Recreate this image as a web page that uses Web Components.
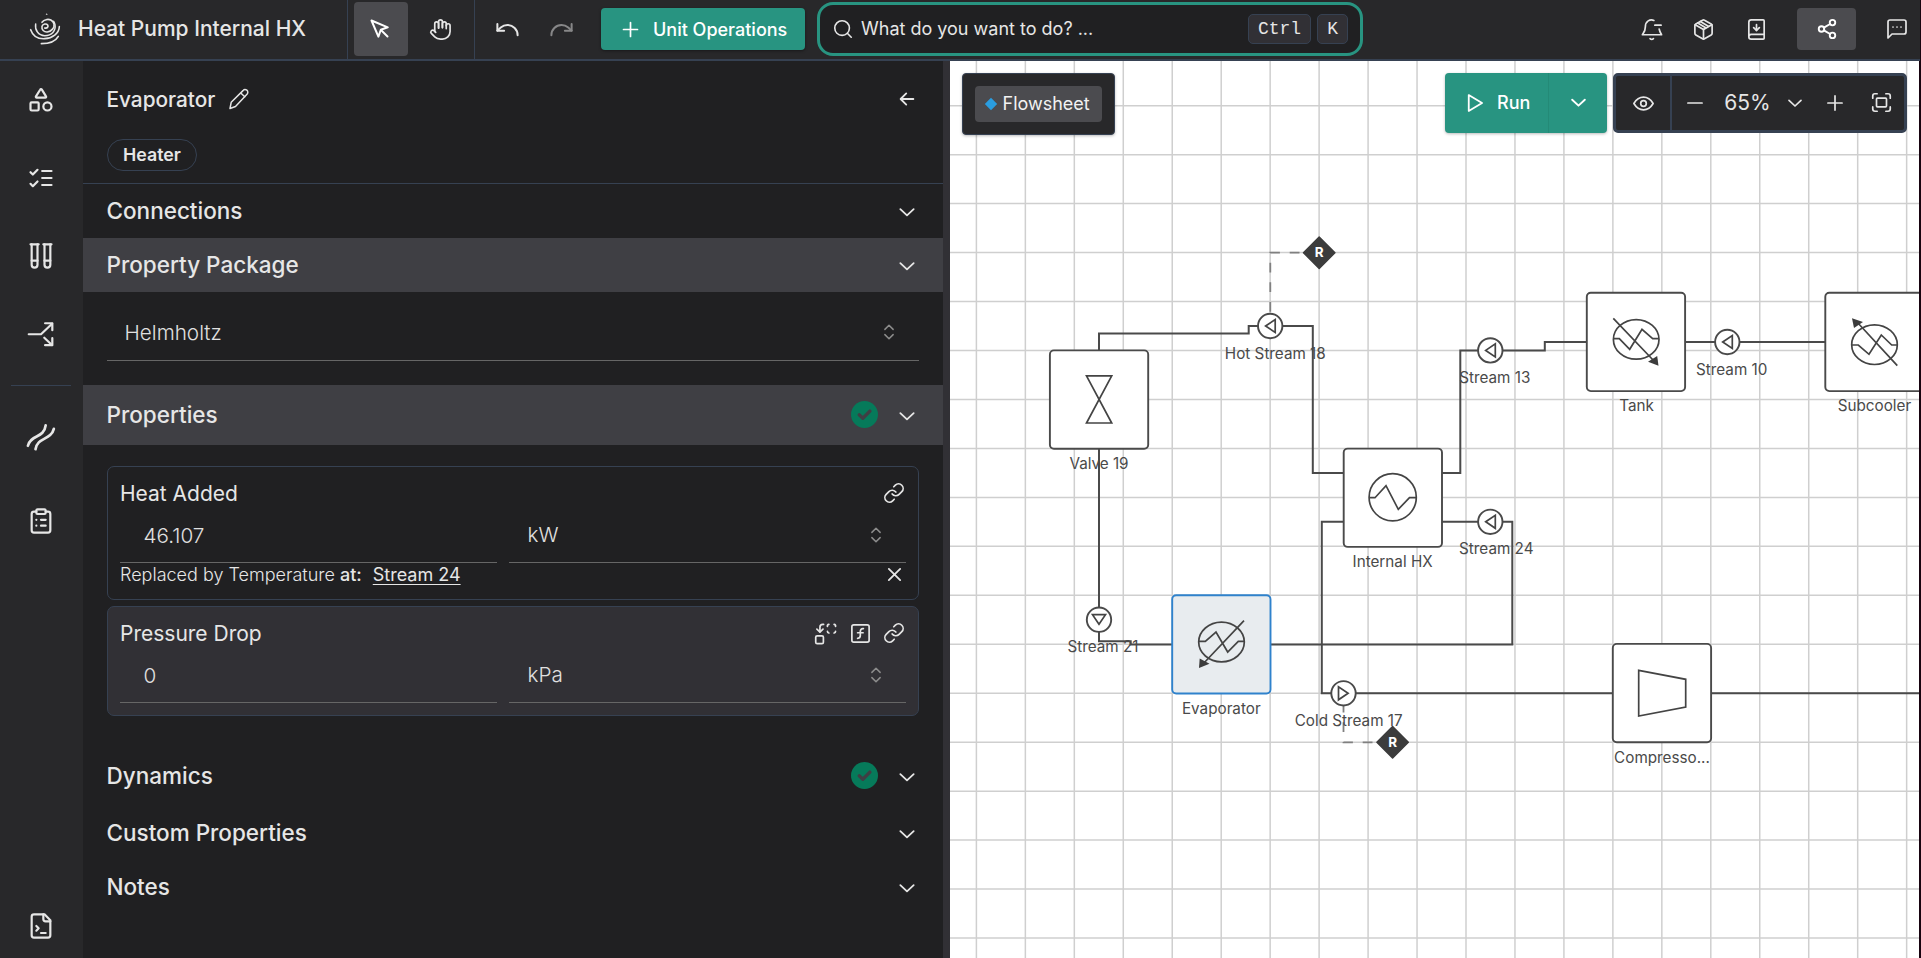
<!DOCTYPE html>
<html lang="en">
<head>
<meta charset="utf-8">
<title>Heat Pump Internal HX</title>
<style>
  html, body { margin: 0; height: 100%; overflow: hidden; background: #17030f; }
  body { font-family: Inter, "Liberation Sans", sans-serif; color: #e6e6e6; }
</style>
</head>
<body>
<app-shell></app-shell>
<script>
const ICONS = {
  cursor: '<path d="m3.5 3.5 6.9 16.2 2.4-7 7-2.4z"/><path d="m13 13 6.5 6.5"/>',
  hand: '<path d="M18 11V6a2 2 0 0 0-4 0v4"/><path d="M14 10V4a2 2 0 0 0-4 0v6.5"/><path d="M10 10.5V6a2 2 0 0 0-4 0v8"/><path d="M18 8a2 2 0 1 1 4 0v6a8 8 0 0 1-8 8h-2c-2.8 0-4.5-.86-5.99-2.34l-3.6-3.6a2 2 0 0 1 2.83-2.82L7 15"/>',
  undo: '<path d="M3 7v6h6"/><path d="M21 17a9 9 0 0 0-9-9 9 9 0 0 0-6 2.3L3 13"/>',
  redo: '<path d="M21 7v6h-6"/><path d="M3 17a9 9 0 0 1 9-9 9 9 0 0 1 6 2.3l3 2.7"/>',
  plus: '<path d="M4 12h16M12 4v16"/>',
  bigplus: '<path d="M3.500 12h17M12 3.500v17"/>',
  minus: '<path d="M3.500 12h17"/>',
  search: '<circle cx="11" cy="11" r="8"/><path d="m21 21-4.3-4.3"/>',
  bell: '<path d="M14.5 2.500C10.500.6 5.600 3.500 5.600 9c0 4.500-1.600 6-3.100 8.500h20c-.8-1.600-2-3.300-2.500-6"/><path d="M10.500 21.500a2.500 2.500 0 0 0 3.500 0"/><path d="M15.500 7.500h6.500"/>',
  box: '<path d="M11 21.730a2 2 0 0 0 2 0l7-4A2 2 0 0 0 21 16V8a2 2 0 0 0-1-1.730l-7-4a2 2 0 0 0-2 0l-7 4A2 2 0 0 0 3 8v8a2 2 0 0 0 1 1.730z"/><path d="M12 22V12"/><path d="M3.300 7 12 12l8.700-5"/><path d="m8.700 3.600 8.300 5"/><path d="m6 5.200 8.300 5"/>',
  book: '<path d="M12 13V7"/><path d="m9 10 3 3 3-3"/><path d="M4 19.500v-15A2.500 2.500 0 0 1 6.500 2H19a1 1 0 0 1 1 1v18a1 1 0 0 1-1 1H6.500a1 1 0 0 1 0-5H20"/>',
  share: '<circle cx="18" cy="5" r="3"/><circle cx="6" cy="12" r="3"/><circle cx="18" cy="19" r="3"/><path d="m8.600 13.500 6.800 4M15.400 6.500l-6.800 4"/>',
  chat: '<path d="M21 15a2 2 0 0 1-2 2H7l-4 4V5a2 2 0 0 1 2-2h14a2 2 0 0 1 2 2z"/><path d="M8 10h.01M12 10h.01M16 10h.01"/>',
  shapes: '<path d="M8.300 10a.7.7 0 0 1-.63-1.080L11.400 3a.7.7 0 0 1 1.200-.04L16.300 8.900a.7.7 0 0 1-.57 1.100z"/><rect x="3" y="14" width="7" height="7" rx="1"/><circle cx="17.500" cy="17.500" r="3.500"/>',
  checks: '<path d="m3 17 2 2 4-4"/><path d="m3 7 2 2 4-4"/><path d="M13 6h8M13 12h8M13 18h8"/>',
  tubes: '<path d="M9 2v17.500A2.500 2.500 0 0 1 6.500 22 2.500 2.500 0 0 1 4 19.500V2"/><path d="M20 2v17.500a2.500 2.500 0 0 1-2.500 2.500 2.500 2.500 0 0 1-2.500-2.500V2"/><path d="M3 2h7M14 2h7M9 16H4M20 16h-5"/>',
  split: '<path d="M1.500 12.200H12L21.500 3.200"/><path d="M15.500 2.800h6.200v6"/><path d="m14.800 15.200 6.600 6.200"/><path d="M21.700 15.600v6h-6.200"/>',
  waves: '<path d="M.8 19.500C3.500 9.500 14.500 13.500 16 2"/><path d="M7.300 22.500C8.800 12 20.500 15 23 5"/>',
  clipboard: '<rect x="8" y="2" width="8" height="4" rx="1"/><path d="M16 4h2a2 2 0 0 1 2 2v14a2 2 0 0 1-2 2H6a2 2 0 0 1-2-2V6a2 2 0 0 1 2-2h2"/><path d="M12 11h4M12 16h4M8 11h.01M8 16h.01"/>',
  terminal: '<path d="M15 2H6a2 2 0 0 0-2 2v16a2 2 0 0 0 2 2h12a2 2 0 0 0 2-2V7z"/><path d="M14 2v4a2 2 0 0 0 2 2h4"/><path d="m8 16 2-2-2-2"/><path d="M12 18h4"/>',
  pencil: '<path d="M16 3.600a2.700 2.700 0 0 1 4.200 3.400L8.500 19.500 3 21.500l1.200-6.200z"/><path d="m14 6.200 3.800 3.600"/>',
  back: '<path d="M20.500 12H4M11 4.500 3.500 12l7.500 7.500"/>',
  chevron: '<path d="m4 8.500 8 7.500 8-7.500"/>',
  updown: '<path d="m6.500 8.500 5.500-5.500 5.500 5.500M6.500 15.500l5.500 5.500 5.500-5.500"/>',
  link: '<path d="M10 13a5 5 0 0 0 7.540.540l3-3a5 5 0 0 0-7.070-7.070l-1.720 1.710"/><path d="M14 11a5 5 0 0 0-7.540-.540l-3 3a5 5 0 0 0 7.070 7.070l1.710-1.710"/>',
  close: '<path d="m4 4 16 16M20 4 4 20"/>',
  fx: '<rect x="3" y="3" width="18" height="18" rx="2"/><path d="M9 17c2 0 2.800-1 2.800-2.800V10c0-2 1-3.300 3.200-3"/><path d="M9 11.200h5.700"/>',
  swap: '<path d="M14 4.500A1.800 1.800 0 0 1 15.500 2.500M15.500 11.500A1.800 1.800 0 0 1 14 9.700M22.500 4.500A1.800 1.800 0 0 0 21 2.500M22.500 9.700A1.800 1.800 0 0 1 21 11.500"/><path d="m3 7.500 3.200 3 3.200-3"/><path d="M6.200 10V5.500a3 3 0 0 1 3-3h.8"/><rect x="1.800" y="14.500" width="8" height="8" rx="1.500"/>',
  eye: '<path d="M1 12c2.800-4.700 6.500-7.200 11-7.200s8.200 2.500 11 7.200c-2.800 4.700-6.500 7.200-11 7.200S3.800 16.700 1 12z"/><circle cx="12" cy="12" r="3.200"/>',
  fit: '<path d="M2 7V4.500A2.500 2.500 0 0 1 4.500 2H7M17 2h2.500A2.500 2.500 0 0 1 22 4.500V7M22 17v2.500a2.500 2.500 0 0 1-2.500 2.500H17M7 22H4.500A2.500 2.500 0 0 1 2 19.500V17"/><rect x="6.300" y="7" width="11.400" height="10" rx="1"/>',
  play: '<path d="M4.500 2.500v19l16-9.500z"/>',
  ok: '<circle cx="12" cy="12" r="12" fill="#067a5a" stroke="none"/><path d="m7.300 12.300 3.200 3 6.300-6.300" stroke="#3f3f44" stroke-width="3"/>'
};

function define(name, html, setup) {
  customElements.define(name, class extends HTMLElement {
    constructor() {
      super();
      const t = document.createElement('template');
      t.innerHTML = html;
      this.attachShadow({ mode: 'open' }).append(t.content.cloneNode(true));
    }
    connectedCallback() { if (setup) setup(this, this.shadowRoot); }
  });
}

/* Stroke icon on a 24-unit grid: size in px, weight in px */
define('ui-icon', `<style>:host{display:block;flex:none;white-space:normal}svg{display:block;overflow:visible}</style>
<svg viewBox="0 0 24 24" fill="none" stroke="currentColor" stroke-linecap="round" stroke-linejoin="round"></svg>`,
(el, root) => {
  const size = +el.getAttribute('size') || 24, w = +el.getAttribute('weight') || 1.7;
  const svg = root.querySelector('svg');
  svg.setAttribute('width', size); svg.setAttribute('height', size);
  svg.setAttribute('stroke-width', w * 24 / size);
  svg.innerHTML = ICONS[el.getAttribute('name')];
});

define('app-logo', `<style>:host{display:block;width:34px;height:34px}svg{display:block}</style>
<svg width="34" height="34" viewBox="54 36 102 102" fill="none" stroke="#e6e6e6" stroke-width="4.800" stroke-linecap="round">
<path d="M107 44h6l-3-4z" fill="#e6e6e6" stroke="none"/>
<path d="M104 84c8 2 12-4 9-9-4-5-14-4-17 4-2 10 6 18 16 17 13-2 22-13 20-24-3-11-14-16-24-13-5 1-9 4-12 8"/>
<path d="M77 72c-3 18 8 34 27 35 22 0 34-15 31-33-1-4-2-7-4-10" stroke-width="4.400"/>
<path d="M62 89c6 18 22 28 42 27 23-1 43-16 44-36"/>
<path d="M94 131c22 0 42-6 51-22"/></svg>`);

define('top-bar', `<style>
:host{display:flex;height:59px;border-bottom:2px solid #364152;background:#28282a;align-items:stretch}
.brand{display:flex;width:348px;box-sizing:border-box;padding-left:28px;gap:16px;border-right:1px solid #364152}
.brand app-logo{margin-top:12px}
h1{margin:0;font-size:21px;font-weight:500;line-height:57px;white-space:nowrap}
.tools{display:flex;align-items:flex-start;padding:2px 0 0 6px;width:127px;box-sizing:border-box;border-right:1px solid #364152}
.tool{display:flex;align-items:center;justify-content:center;width:54px;height:54px;border-radius:4px}
.tool ui-icon[name=cursor]{margin:0 2px 1px 0}
.tool+.tool{margin-left:5px}
.on{background:#4b4b4f;color:#fff}
.hist{display:flex;align-items:center;gap:27px;padding-left:19px}
.hist ui-icon+ui-icon{opacity:.5}
.add{display:flex;align-items:center;margin:8px 0 0 26px;height:42px;width:204px;box-sizing:border-box;padding-left:19px;gap:12px;border-radius:4px;background:#289481;color:#fff;font-weight:500;font-size:18px;box-shadow:0 1px 3px #0006;white-space:nowrap}
.search{display:flex;align-items:center;box-sizing:border-box;margin:2px 0 0 12px;width:546px;height:54px;border:3px solid #289481;border-radius:16px;background:#202022;padding:0 12px 1px 12px;gap:7px;font-size:18px}
.search span{flex:1}
kbd{font-family:"Liberation Mono",monospace;font-size:18px;line-height:28px;border:1px solid #364152;border-radius:5px;background:#313035;padding:0 9px;height:28px}
.right{display:flex;align-items:center;margin-left:auto;height:58px;padding-right:11px}
.share{display:flex;align-items:center;justify-content:center;width:59px;height:42px;border-radius:4px;margin:0 29px 0 29px}
</style>
<div class="brand"><app-logo></app-logo><h1>Heat Pump Internal HX</h1></div>
<div class="tools"><div class="tool on"><ui-icon name="cursor" size="24" weight="2"></ui-icon></div><div class="tool"><ui-icon name="hand" size="23" weight="1.700"></ui-icon></div></div>
<div class="hist"><ui-icon name="undo" size="27" weight="2"></ui-icon><ui-icon name="redo" size="27" weight="2"></ui-icon></div>
<div class="add"><ui-icon name="plus" size="21" weight="1.700"></ui-icon>Unit Operations</div>
<div class="search"><ui-icon name="search" size="22" weight="1.600"></ui-icon><span>What do you want to do? ...</span><kbd>Ctrl</kbd><kbd style="margin-left:-1px">K</kbd></div>
<div class="right"><ui-icon name="bell" size="23"></ui-icon><ui-icon name="box" size="23" style="margin-left:29px"></ui-icon><ui-icon name="book" size="23" style="margin-left:30px"></ui-icon><div class="share on"><ui-icon name="share" size="22" weight="1.900"></ui-icon></div><ui-icon name="chat" size="24"></ui-icon></div>`);

define('side-rail', `<style>
:host{display:flex;flex-direction:column;align-items:center;width:83px;box-sizing:border-box;background:#28282a;padding:25px 1px 18px 0}
ui-icon{margin-bottom:50px}
hr{border:0;width:60px;height:1px;background:#364152;margin:-13px 0 37px}
.end{margin:auto 0 0}
</style>
<ui-icon name="shapes" size="28" weight="2.200"></ui-icon>
<ui-icon name="checks" size="28" weight="2.200"></ui-icon>
<ui-icon name="tubes" size="28" weight="2.200"></ui-icon>
<ui-icon name="split" size="28" weight="2.200"></ui-icon>
<hr>
<ui-icon name="waves" size="28" weight="2.700" style="margin-bottom:56px"></ui-icon>
<ui-icon name="clipboard" size="28" weight="2.200"></ui-icon>
<ui-icon class="end" name="terminal" size="28" weight="2.200"></ui-icon>`);

define('section-row', `<style>
:host{display:flex;align-items:center;height:54px;box-sizing:border-box;padding:0 26px 2px 23.500px;font-size:22.500px;font-weight:500}
:host([open]){background:#3f3f44}
:host([tall]){height:60px}
.t{flex:1}
ui-icon[name=ok]{display:none;margin-right:19px}
:host([ok]) ui-icon[name=ok]{display:block}
ui-icon[name=chevron]{margin-top:3px}
</style><div class="t"><slot></slot></div><ui-icon name="ok" size="27"></ui-icon><ui-icon name="chevron" size="20" weight="1.800"></ui-icon>`);

/* Underlined value or unit selector */
define('text-field', `<style>
:host{display:flex;align-items:center;box-sizing:border-box;height:55px;border-bottom:1px solid #666;font-size:20.700px;font-weight:300;color:#e0e0e0}
.t{flex:1}
ui-icon{display:none;color:#8c8c8c}
:host([select]) ui-icon{display:block}
</style><div class="t"><slot></slot></div><ui-icon name="updown" size="18" weight="1.500"></ui-icon>`);

define('property-card', `<style>
:host{display:block;box-sizing:border-box;border:1px solid #364152;border-radius:7px;padding:12px 12px 0}
:host([shaded]){background:#313035}
.head{display:flex;justify-content:space-between;align-items:center;box-sizing:border-box;height:30px;padding-bottom:2px;font-size:21px}
.acts{display:flex;gap:11.500px;padding-right:1px}
.fields{display:grid;grid-template-columns:377px 1fr;gap:12px}
text-field{height:54px;padding:0 24px 1px 23.500px}
text-field[select]{padding:0 21px 2px 18.500px}
</style><div class="head"><slot name="title"></slot><div class="acts"><slot name="actions"></slot></div></div>
<div class="fields"><text-field><slot name="value"></slot></text-field><text-field select><slot name="unit"></slot></text-field></div><slot></slot>`);

define('property-panel', `<style>
:host{display:flex;flex-direction:column;width:860px;background:#202022;border-right:7px solid #313035}
.name{display:flex;align-items:center;height:76px;padding:0 27px 0 23.500px;font-size:20.800px;font-weight:500;gap:11.500px}
.name ui-icon:last-child{margin-left:auto}
.type{box-sizing:border-box;height:47px;border-bottom:1px solid #364152;padding:2px 24px 0}
.pill{display:inline-block;box-sizing:border-box;height:32px;line-height:30px;border:1px solid #364152;border-radius:16px;padding:0 15px;font-size:17.800px;font-weight:600}
.pp{margin:14px 24px 24px;height:55px;padding:0 21px 2px 17.500px}
.cards{padding:21px 24px 30px;display:flex;flex-direction:column;gap:6px}
.rep{display:flex;align-items:center;height:23px;font-size:18px;font-weight:300;white-space:pre}
.rep b{font-weight:500}.rep u{font-weight:400;margin-left:11px;text-underline-offset:3px}
.rep ui-icon{margin:0 3px 0 auto}
</style>
<div class="name">Evaporator<ui-icon name="pencil" size="24" weight="1.500"></ui-icon><ui-icon name="back" size="18" weight="1.800"></ui-icon></div>
<div class="type"><span class="pill">Heater</span></div>
<section-row>Connections</section-row>
<section-row open>Property Package</section-row>
<text-field select class="pp">Helmholtz</text-field>
<section-row open tall ok>Properties</section-row>
<div class="cards">
<property-card style="height:134px"><span slot="title">Heat Added</span><ui-icon slot="actions" name="link" size="22" weight="1.700"></ui-icon><span slot="value">46.107</span><span slot="unit">kW</span>
<div class="rep">Replaced by Temperature <b>at:</b><u>Stream 24</u><ui-icon name="close" size="17" weight="1.800"></ui-icon></div></property-card>
<property-card shaded style="height:110px"><span slot="title">Pressure Drop</span><ui-icon slot="actions" name="swap" size="23"></ui-icon><ui-icon slot="actions" name="fx" size="23"></ui-icon><ui-icon slot="actions" name="link" size="22" weight="1.700"></ui-icon><span slot="value">0</span><span slot="unit">kPa</span></property-card>
</div>
<section-row tall ok>Dynamics</section-row>
<section-row>Custom Properties</section-row>
<section-row>Notes</section-row>`);

/* Diagram drawn in window coordinates; the viewBox shifts them to the canvas origin */
define('flow-diagram', `<style>:host{display:block}svg{display:block}
.w{fill:none;stroke:#4a4a4a;stroke-width:2}
.n{fill:#fff;stroke:#4a4a4a;stroke-width:1.900}
.g{fill:none;stroke:#444;stroke-width:1.700}
.h{fill:#3c3c3c}
.d{fill:none;stroke:#808080;stroke-width:1.800;stroke-dasharray:9.800 9.800}
text{font-size:15.250px;fill:#4a4a4a;text-anchor:middle}
.r{font-size:13.500px;font-weight:700;fill:#fff}
</style><svg width="969" height="897" viewBox="950 61 969 897"></svg>`, (el, root) => {
  let s = '<g stroke="#cfcfcf" stroke-width="1.500">';
  for (let i = 0; i < 20; i++) s += `<path d="M${976.4 + i * 48.96} 61V958"/>`;
  for (let i = 0; i < 18; i++) s += `<path d="M950 ${105.7 + i * 48.96}H1919"/>`;
  s += '</g>';
  const wire = d => s += `<path class="w" d="${d}"/>`;
  wire('M1099 350.500V333.500H1248.700V326H1258');
  wire('M1282 326H1312.800V473H1344');
  wire('M1099 448.700V607.500M1099 632V641.300H1130.700V644.400H1172');
  wire('M1442 473H1460.300V350.400H1478M1502.500 350.400H1544.800V342H1587');
  wire('M1685 342H1715M1739.500 342H1825');
  wire('M1442 521.700H1478M1502.500 521.700H1512.300V644.400H1270.500');
  wire('M1343.500 521.700H1321.800V693.300H1331.500M1355.700 693.300H1612M1711 693.300H1919');
  s += '<path class="d" d="M1270.300 311.700V252.700H1304M1343.500 702.700V742.300H1377" />';
  const node = (x, y, label, lx, glyph, sel) => {
    s += `<rect class="n" x="${x}" y="${y}" width="98.300" height="98.300" rx="4"${sel ? ' style="fill:#e8ecef;stroke:#2f82cc"' : ''}/>${glyph}<text x="${lx}" y="${y + 118.6}">${label}</text>`;
  };
  const glyph = d => `<path class="g" d="${d}"/>`;
  node(1049.9, 350.4, 'Valve 19', 1099, glyph('M1086.500 375.800H1111.700L1086.500 423H1111.700Z'));
  node(1343.7, 448.6, 'Internal HX', 1392.6, '<circle class="g" cx="1392.700" cy="497.300" r="23.600"/>' + glyph('M1369 497.700H1375L1386 485.700 1398.300 509.300 1409.500 497.700H1416.500'));
  node(1586.8, 292.8, 'Tank', 1636.6, '<ellipse class="g" cx="1636.200" cy="339.400" rx="22.800" ry="19.800"/>' + glyph('M1613.300 338.700H1619.300L1629.700 349.300 1642 329.300 1652.700 338.700H1659M1613.300 318.300 1654 361') + '<path class="h" d="M1658.500 365.700 1648 361.700 1657.200 356z"/>');
  node(1825.3, 292.8, 'Subcooler', 1874.4, '<ellipse class="g" cx="1874.500" cy="344.700" rx="22.800" ry="19.800"/>' + glyph('M1851.700 345H1858.300L1869 354.300 1881.300 335 1891.700 345H1897.700M1897.300 365.700 1857 322') + '<path class="h" d="M1852 318.200 1863 322 1854 328z"/>');
  node(1172.2, 595.2, 'Evaporator', 1221.3, '<ellipse class="g" cx="1221.500" cy="642" rx="22.800" ry="19.800"/>' + glyph('M1198.700 641.300H1205.300L1216 632 1227.700 652 1238.300 641.300H1244.300M1244 620.700 1203 664') + '<path class="h" d="M1199 667.900 1199.700 658.500 1209.500 663.700z"/>', true);
  node(1612.8, 643.9, 'Compresso...', 1662, glyph('M1638.700 670.300 1685.700 679.300V707L1638.700 716Z'));
  const stream = (x, y, label, lx, ly, rot) => {
    s += `<g transform="translate(${x} ${y}) rotate(${rot})"><circle class="n" r="12.200"/><path class="g" d="M-4.600 0 5-6.500V6.500Z"/></g><text x="${lx}" y="${ly + 0.4}">${label}</text>`;
  };
  stream(1270.2, 326, 'Hot Stream 18', 1275.3, 358.2, 0);
  stream(1490.3, 350.4, 'Stream 13', 1494.8, 382.7, 0);
  stream(1727.3, 342, 'Stream 10', 1731.7, 374.4, 0);
  stream(1490.3, 521.8, 'Stream 24', 1496.3, 553.4, 0);
  stream(1099, 619.7, 'Stream 21', 1103, 651.7, 270);
  stream(1343.5, 693.3, 'Cold Stream 17', 1348.7, 725.3, 180);
  for (const [x, y] of [[1319.2, 252.7], [1392.6, 742.2]])
    s += `<path d="M${x} ${y - 15.7}l15.700 15.700-15.700 15.700-15.700-15.700z" fill="#3c3c3c" stroke="#3c3c3c" stroke-width="1.500" stroke-linejoin="round"/><text class="r" x="${x}" y="${y + 4.5}">R</text>`;
  root.querySelector('svg').innerHTML = s;
});

define('canvas-toolbar', `<style>
:host{display:flex;box-sizing:border-box;padding:12px 12px 0 12px;pointer-events:none;align-items:flex-start}
.crumb{box-sizing:border-box;width:153px;height:62px;border:1px solid #364152;border-radius:4px;background:#28282a;padding:12px;box-shadow:0 1px 3px #0004}
.crumb div{display:flex;align-items:center;gap:4.500px;box-sizing:border-box;height:36px;padding:0 0 1px 9px;border-radius:4px;background:#4b4b4f;font-size:18px;color:#f2f2f2}
.run{display:flex;margin-left:auto;width:162px;height:60px;border-radius:4px;background:#289481;color:#fff;font-size:18px;font-weight:500;box-shadow:0 1px 3px #0004}
.run .a{display:flex;align-items:center;gap:12px;width:104px;box-sizing:border-box;padding:0 0 1px 20px;border-right:1px solid #248a77}
.run .b{display:flex;flex:1;align-items:center;justify-content:center;padding-bottom:1px}
.zoom{display:flex;align-items:center;margin-left:6px;width:294px;height:60px;box-sizing:border-box;border:3px solid #364152;border-radius:5px;background:#28282a;font-size:21px;padding-bottom:1px}
.eye{display:flex;align-items:center;justify-content:center;width:54px;height:54px;margin-bottom:-1px;border-right:2px solid #364152}
</style>
<div class="crumb"><div><svg width="14" height="14" viewBox="0 0 14 14"><path d="M7 .8 13.200 7 7 13.200.8 7z" fill="#2a9de0"/></svg>Flowsheet</div></div>
<div class="run"><div class="a"><ui-icon name="play" size="20" weight="1.800"></ui-icon>Run</div><div class="b"><ui-icon name="chevron" size="19" weight="1.900"></ui-icon></div></div>
<div class="zoom"><div class="eye"><ui-icon name="eye" size="21"></ui-icon></div>
<ui-icon name="minus" size="20" style="margin-left:13px"></ui-icon><span style="width:52px;text-align:center;margin-left:16.500px">65%</span><ui-icon name="chevron" size="18" style="margin-left:12px"></ui-icon><ui-icon name="bigplus" size="20" style="margin-left:21px"></ui-icon><ui-icon name="fit" size="21" style="margin-left:26.500px"></ui-icon></div>`);

define('flow-canvas', `<style>
:host{display:grid;flex:1;background:#fff;min-width:0;overflow:hidden}
flow-diagram,canvas-toolbar{grid-area:1/1}
</style><flow-diagram></flow-diagram><canvas-toolbar></canvas-toolbar>`);

define('app-shell', `<style>
:host{display:flex;flex-direction:column;width:1920px;height:958px;overflow:hidden}
main{display:flex;flex:1;min-height:0;width:1919px}
</style><top-bar></top-bar><main><side-rail></side-rail><property-panel></property-panel><flow-canvas></flow-canvas></main>`);
</script>
</body>
</html>
